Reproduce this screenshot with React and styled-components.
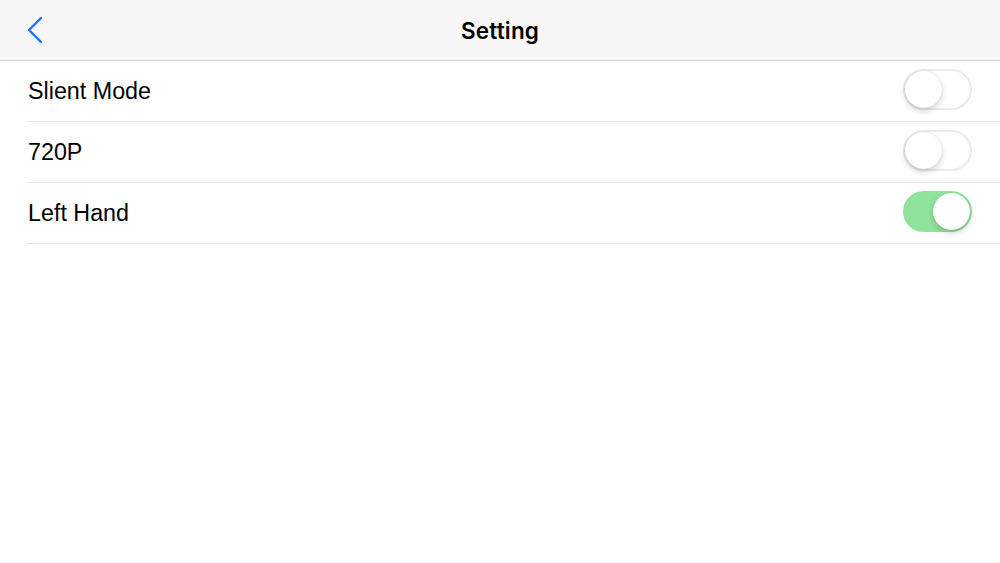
import React, { useState } from "react";
import styled, { createGlobalStyle } from "styled-components";

const GlobalStyle = createGlobalStyle`
  html, body {
    margin: 0;
    padding: 0;
    background: #ffffff;
  }
  body {
    font-family: "Liberation Sans", Arial, sans-serif;
    color: #000;
  }
`;

const Page = styled.div`
  width: 1000px;
  height: 563px;
  background: #ffffff;
  overflow: hidden;
`;

const Header = styled.header`
  height: 60px;
  background: #f7f7f7;
  border-bottom: 1px solid #d6d6d6;
  display: grid;
  grid-template-columns: 100px 1fr 100px;
  align-items: center;
`;

const BackButton = styled.button`
  border: none;
  background: none;
  padding: 0 0 0 25px;
  height: 60px;
  display: flex;
  align-items: center;
  cursor: pointer;
`;

const Title = styled.h1`
  margin: 0;
  text-align: center;
  font-size: 22.5px;
  font-weight: 600;
  font-family: "Inter", "Liberation Sans", sans-serif;
  letter-spacing: 0.2px;
  padding-top: 1px;
`;

const List = styled.ul`
  list-style: none;
  margin: 0;
  padding: 0 0 0 27px;
`;

const Row = styled.li`
  height: 60px;
  border-bottom: 1px solid #e4e4e4;
  display: flex;
  align-items: center;
  justify-content: space-between;
  padding: 0 28px 0 1px;
`;

const Label = styled.span`
  font-size: 23.3px;
  padding-top: 1px;
`;

const Track = styled.button`
  position: relative;
  width: 69px;
  height: 41px;
  border-radius: 21px;
  border: 2px solid ${(p) => (p.$on ? "#8fe39c" : "#ebebeb")};
  background: ${(p) => (p.$on ? "#8fe39c" : "#ffffff")};
  padding: 0;
  margin-bottom: 3px;
  cursor: pointer;
  box-sizing: border-box;
`;

const Knob = styled.span`
  position: absolute;
  top: 0;
  left: ${(p) => (p.$on ? "28px" : "0")};
  width: 37px;
  height: 37px;
  border-radius: 50%;
  background: #ffffff;
  box-shadow: 0 3px 6px rgba(0, 0, 0, 0.18), 0 0 1px rgba(0, 0, 0, 0.15);
`;

function Toggle({ on, onChange }) {
  return (
    <Track $on={on} onClick={onChange} aria-pressed={on}>
      <Knob $on={on} />
    </Track>
  );
}

export default function App() {
  const [settings, setSettings] = useState([
    { name: "Slient Mode", on: false },
    { name: "720P", on: false },
    { name: "Left Hand", on: true },
  ]);

  const flip = (i) =>
    setSettings((s) => s.map((it, j) => (j === i ? { ...it, on: !it.on } : it)));

  return (
    <Page>
      <GlobalStyle />
      <Header>
        <BackButton aria-label="Back">
          <svg width="20" height="28" viewBox="0 0 20 28">
            <path
              d="M16 2 L4 14 L16 26"
              fill="none"
              stroke="#1c72f2"
              strokeWidth="2.4"
              strokeLinecap="round"
              strokeLinejoin="round"
            />
          </svg>
        </BackButton>
        <Title>Setting</Title>
        <div />
      </Header>
      <List>
        {settings.map((it, i) => (
          <Row key={it.name}>
            <Label>{it.name}</Label>
            <Toggle on={it.on} onChange={() => flip(i)} />
          </Row>
        ))}
      </List>
    </Page>
  );
}
